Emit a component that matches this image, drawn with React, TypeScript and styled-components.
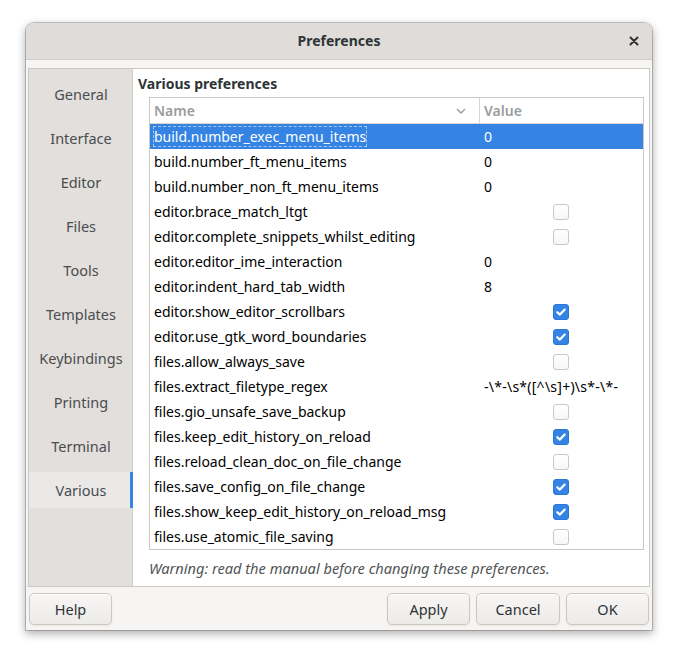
import React from "react";
import styled, { createGlobalStyle } from "styled-components";

const Global = createGlobalStyle`
  html, body { margin: 0; padding: 0; background: #ffffff; }
  body { font-family: "Noto Sans", "DejaVu Sans", sans-serif; }
  * { box-sizing: border-box; }
`;

const Page = styled.div`
  width: 677px;
  height: 659px;
  padding: 23px 0 0 26px;
`;

const Window = styled.div`
  width: 626px;
  height: 607px;
  display: flex;
  flex-direction: column;
  background: #f6f5f4;
  border-radius: 8px 8px 0 0;
  box-shadow: 0 0 0 1px rgba(0, 0, 0, 0.2), 0 3px 9px 1px rgba(0, 0, 0, 0.3);
`;

const TitleBar = styled.div`
  height: 37px;
  flex: none;
  display: grid;
  grid-template-columns: 40px 1fr 40px;
  align-items: center;
  background: #dfdcd9;
  border-radius: 8px 8px 0 0;
  border-bottom: 1px solid #cfcbc7;
  color: #2e3436;
`;

const Title = styled.div`
  grid-column: 2;
  text-align: center;
  font-weight: 700;
  font-size: 14px;
  margin-top: -1px;
`;

const Close = styled.div`
  display: flex;
  justify-content: center;
  padding-left: 4px;
`;

const Body = styled.div`
  flex: 1;
  display: flex;
  flex-direction: column;
  padding: 8px 2px 0 2px;
`;

const Notebook = styled.div`
  height: 519px;
  display: flex;
  border: 1px solid #cdc7c2;
  background: #ffffff;
`;

const Sidebar = styled.div`
  width: 104px;
  flex: none;
  display: flex;
  flex-direction: column;
  gap: 8px;
  padding-top: 7px;
  background: #e2dfdc;
  border-right: 1px solid #d5d0cc;
`;

const Tab = styled.div<{ $active?: boolean }>`
  height: 36px;
  display: flex;
  align-items: center;
  justify-content: center;
  font-size: 14.5px;
  color: #4a4d4f;
  background: ${(p) => (p.$active ? "#ebe9e7" : "transparent")};
  box-shadow: ${(p) => (p.$active ? "inset -3px 0 0 #3584e4" : "none")};
  margin-right: -1px;
`;

const Content = styled.div`
  flex: 1;
  display: flex;
  flex-direction: column;
  padding: 6px 5px 0 4px;
`;

const Heading = styled.div`
  font-weight: 700;
  font-size: 14px;
  color: #2e3436;
  height: 22px;
  line-height: 18px;
  padding-left: 1px;
`;

const Tree = styled.div`
  margin-left: 12px;
  border: 1px solid #cdc7c2;
  display: flex;
  flex-direction: column;
`;

const HeaderRow = styled.div`
  height: 26px;
  display: grid;
  grid-template-columns: 330px 1fr;
  border-bottom: 1px solid #d8d4d0;
`;

const HeaderCell = styled.div<{ $sep?: boolean }>`
  display: flex;
  align-items: center;
  justify-content: space-between;
  padding: 0 12px 0 4px;
  font-size: 14px;
  font-weight: 600;
  color: #9a9c9d;
  border-right: ${(p) => (p.$sep ? "1px solid #d8d4d0" : "none")};
`;

const Row = styled.div<{ $selected?: boolean }>`
  height: 25px;
  display: grid;
  grid-template-columns: 330px 1fr;
  align-items: center;
  font-size: 14px;
  background: ${(p) => (p.$selected ? "#3584e4" : "transparent")};
  color: ${(p) => (p.$selected ? "#ffffff" : "#000000")};
`;

const NameCell = styled.div`
  padding-left: 4px;
  white-space: nowrap;
`;

const Focus = styled.span`
  outline: 1px dashed rgba(255, 255, 255, 0.55);
  outline-offset: 0px;
`;

const ValueCell = styled.div`
  padding-left: 4px;
  white-space: nowrap;
  font-size: 14px;
  letter-spacing: 0.25px;
`;

const CheckCell = styled.div`
  padding-left: 73px;
  display: flex;
  align-items: center;
`;

const Box = styled.div<{ $checked?: boolean }>`
  width: 16px;
  height: 16px;
  border-radius: 3px;
  display: flex;
  align-items: center;
  justify-content: center;
  background: ${(p) => (p.$checked ? "#3584e4" : "linear-gradient(#ffffff, #f8f7f6)")};
  border: 1px solid ${(p) => (p.$checked ? "#2a76d4" : "#cdc7c2")};
`;

const Warning = styled.div`
  margin-top: 8px;
  padding-left: 12px;
  font-style: italic;
  font-size: 14.6px;
  color: #505456;
`;

const Actions = styled.div`
  flex: 1;
  display: flex;
  align-items: center;
  gap: 6px;
  padding: 0 1px 0 1px;
`;

const Spacer = styled.div`
  flex: 1;
`;

const Button = styled.button<{ $w?: number }>`
  width: ${(p) => p.$w ?? 83}px;
  height: 32px;
  border: 1px solid #cdc7c2;
  border-radius: 5px;
  background: linear-gradient(#f7f6f5, #edebe9);
  box-shadow: inset 0 1px #ffffff, 0 1px 2px rgba(0, 0, 0, 0.07);
  font-family: "Noto Sans", "DejaVu Sans", sans-serif;
  font-size: 14.5px;
  color: #2e3436;
  padding: 0;
`;

type Item = { name: string; value: string | boolean };

const items: Item[] = [
  { name: "build.number_exec_menu_items", value: "0" },
  { name: "build.number_ft_menu_items", value: "0" },
  { name: "build.number_non_ft_menu_items", value: "0" },
  { name: "editor.brace_match_ltgt", value: false },
  { name: "editor.complete_snippets_whilst_editing", value: false },
  { name: "editor.editor_ime_interaction", value: "0" },
  { name: "editor.indent_hard_tab_width", value: "8" },
  { name: "editor.show_editor_scrollbars", value: true },
  { name: "editor.use_gtk_word_boundaries", value: true },
  { name: "files.allow_always_save", value: false },
  { name: "files.extract_filetype_regex", value: "-\\*-\\s*([^\\s]+)\\s*-\\*-" },
  { name: "files.gio_unsafe_save_backup", value: false },
  { name: "files.keep_edit_history_on_reload", value: true },
  { name: "files.reload_clean_doc_on_file_change", value: false },
  { name: "files.save_config_on_file_change", value: true },
  { name: "files.show_keep_edit_history_on_reload_msg", value: true },
  { name: "files.use_atomic_file_saving", value: false },
];

const tabs = [
  "General",
  "Interface",
  "Editor",
  "Files",
  "Tools",
  "Templates",
  "Keybindings",
  "Printing",
  "Terminal",
  "Various",
];

function Check({ checked }: { checked: boolean }) {
  return (
    <Box $checked={checked}>
      {checked && (
        <svg width="12" height="12" viewBox="0 0 12 12">
          <path d="M2.3 6.2 L4.9 8.6 L9.7 3.6" fill="none" stroke="#fff" strokeWidth="2.2" strokeLinecap="round" strokeLinejoin="round" />
        </svg>
      )}
    </Box>
  );
}

export default function App() {
  return (
    <>
      <Global />
      <Page>
        <Window>
          <TitleBar>
            <Title>Preferences</Title>
            <Close>
              <svg width="10" height="10" viewBox="0 0 10 10">
                <path d="M1.5 1.5 L8.5 8.5 M8.5 1.5 L1.5 8.5" stroke="#2e3436" strokeWidth="2" strokeLinecap="round" />
              </svg>
            </Close>
          </TitleBar>
          <Body>
            <Notebook>
              <Sidebar>
                {tabs.map((t) => (
                  <Tab key={t} $active={t === "Various"}>
                    {t}
                  </Tab>
                ))}
              </Sidebar>
              <Content>
                <Heading>Various preferences</Heading>
                <Tree>
                  <HeaderRow>
                    <HeaderCell $sep>
                      <span>Name</span>
                      <svg width="12" height="8" viewBox="0 0 12 8">
                        <path d="M2 2 L6 6 L10 2" fill="none" stroke="#9a9c9d" strokeWidth="1.4" />
                      </svg>
                    </HeaderCell>
                    <HeaderCell>Value</HeaderCell>
                  </HeaderRow>
                  {items.map((it, i) => (
                    <Row key={it.name} $selected={i === 0}>
                      <NameCell>{i === 0 ? <Focus>{it.name}</Focus> : it.name}</NameCell>
                      {typeof it.value === "boolean" ? (
                        <CheckCell>
                          <Check checked={it.value} />
                        </CheckCell>
                      ) : (
                        <ValueCell>{it.value}</ValueCell>
                      )}
                    </Row>
                  ))}
                </Tree>
                <Warning>Warning: read the manual before changing these preferences.</Warning>
              </Content>
            </Notebook>
            <Actions>
              <Button>Help</Button>
              <Spacer />
              <Button>Apply</Button>
              <Button $w={84}>Cancel</Button>
              <Button>OK</Button>
            </Actions>
          </Body>
        </Window>
      </Page>
    </>
  );
}
